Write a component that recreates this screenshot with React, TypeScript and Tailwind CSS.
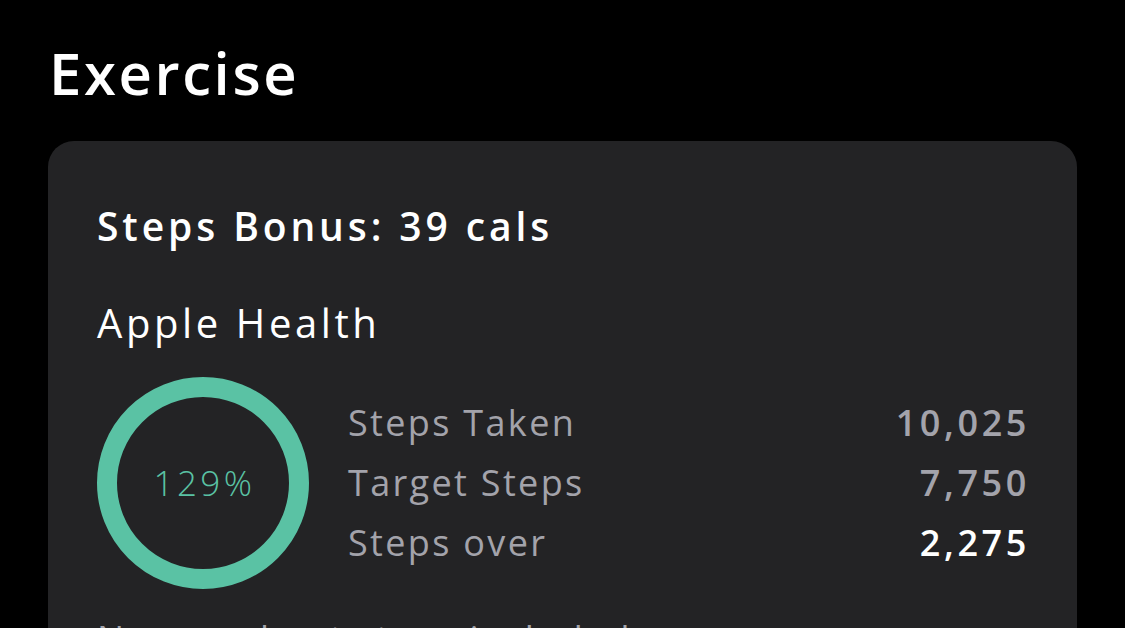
import React from 'react';

const rows = [
	{ label: 'Steps Taken', value: '10,025', strong: false },
	{ label: 'Target Steps', value: '7,750', strong: false },
	{ label: 'Steps over', value: '2,275', strong: true },
];

const Ring: React.FC<{ pct: number }> = ({ pct }) => (
	<div className="relative w-[212px] h-[212px] shrink-0">
		<svg width="212" height="212" viewBox="0 0 212 212">
			<circle cx="106" cy="106" r="96" fill="none" stroke="#5ac2a4" strokeWidth="20" />
		</svg>
		<div className="absolute inset-0 flex items-center justify-center pl-[3px] text-[35px] font-light tracking-[0.1em] text-[#5ac2a4]">
			{pct}%
		</div>
	</div>
);

const App: React.FC = () => {
	return (
		<div className="min-h-screen bg-black text-white px-[48px] pt-[38px] font-['Open_Sans',sans-serif] overflow-hidden h-[628px]">
			<h1 className="text-[58px] leading-[70px] font-semibold pl-[1px] tracking-[0.045em]">Exercise</h1>

			<div className="mt-[33px] bg-[#232325] rounded-[26px] px-[49px] pt-[61px] pb-10">
				<div className="text-[39px] leading-[48px] font-semibold tracking-[0.1em]">Steps Bonus: 39 cals</div>
				<div className="mt-[49px] text-[40px] leading-[48px] tracking-[0.09em]">Apple Health</div>

				<div className="mt-[30px] flex items-center">
					<Ring pct={129} />
					<div className="ml-[39px] flex-1">
						{rows.map((r) => (
							<div key={r.label} className="flex justify-between items-center h-[60px] text-[36px]">
								<span className="text-[#a3a3ab] tracking-[0.065em]">{r.label}</span>
								<span
									className={
										r.strong
											? 'text-white font-semibold tracking-[0.1em] mr-[-2px]'
											: 'text-[#a3a3ab] font-semibold tracking-[0.1em] mr-[-2px]'
									}
								>
									{r.value}
								</span>
							</div>
						))}
					</div>
				</div>

				<div className="mt-[20px] text-[36px] leading-[60px] text-[#a3a3ab] tracking-[0.065em]">
					Non-workout steps included
				</div>
			</div>
		</div>
	);
};

export default App;
